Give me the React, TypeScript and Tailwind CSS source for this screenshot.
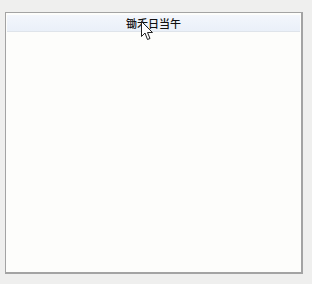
import React from "react";

export default function App() {
  return (
    <div className="w-[312px] h-[284px] bg-[#efefee] pt-[12px] pl-[5px]">
      <div className="relative w-[298px] h-[262px] border border-[#a3a3a3] border-r-[2px] border-b-[2px] bg-[#fdfdfb] p-[1px]">
        <div className="h-[17px] mt-[1px] bg-gradient-to-b from-[#f3f6fc] to-[#eaf0f9] border-b border-[#dfe4ea] flex items-center justify-center">
          <span
            className="text-[11px] leading-none text-[#111] font-medium"
            style={{ fontFamily: '"Noto Sans CJK SC", sans-serif' }}
          >
            锄禾日当午
          </span>
        </div>
        <svg
          className="absolute left-[135px] top-[8px]"
          width="13"
          height="20"
          viewBox="0 0 13 20"
        >
          <path
            d="M0.5 0.5 L0.5 15.5 L4 12 L6.5 18.5 L9 17.5 L6.5 11.5 L11.5 11.5 Z"
            fill="#ffffff"
            stroke="#222"
            strokeWidth="1"
            strokeLinejoin="miter"
          />
        </svg>
      </div>
    </div>
  );
}
